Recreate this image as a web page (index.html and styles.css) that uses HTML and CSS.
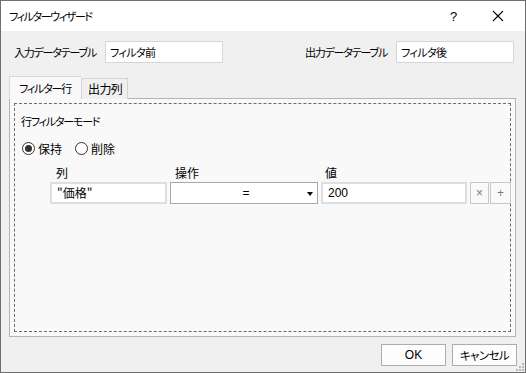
FILE: index.html
```html
<!DOCTYPE html>
<html lang="ja">
<head>
<meta charset="utf-8">
<link rel="stylesheet" href="styles.css">
</head>
<body>
<div class="window">
  <div class="titlebar">
    <span class="title kt">フィルターウィザード</span>
    <span class="help">?</span>
    <span class="close">
      <svg width="12" height="12" viewBox="0 0 12 12"><path d="M1 1 L11 11 M11 1 L1 11" stroke="#000" stroke-width="1.1" fill="none"/></svg>
    </span>
  </div>
  <div class="content">
    <div class="io-row">
      <div class="io-group">
        <span class="io-label kt">入力データテーブル</span>
        <div class="textbox">フィルタ前</div>
      </div>
      <div class="io-group">
        <span class="io-label kt">出力データテーブル</span>
        <div class="textbox">フィルタ後</div>
      </div>
    </div>
    <div class="tabs">
      <div class="tab active"><span class="kt">フィルター行</span></div>
      <div class="tab">出力列</div>
    </div>
    <div class="panel">
      <div class="focus">
        <div class="mode-label kt">行フィルターモード</div>
        <div class="radios">
          <span class="radio checked"></span><span class="radio-text">保持</span>
          <span class="radio"></span><span class="radio-text">削除</span>
        </div>
        <div class="grid">
          <span class="col-label">列</span>
          <span class="col-label">操作</span>
          <span class="col-label">値</span>
          <span></span><span></span>
          <div class="cell name">"価格"</div>
          <div class="select"><span class="sel-value">=</span><span class="arrow"></span></div>
          <div class="cell">200</div>
          <div class="mini">×</div>
          <div class="mini">+</div>
        </div>
      </div>
    </div>
    <div class="buttons">
      <div class="btn ok">OK</div>
      <div class="btn">キャンセル</div>
    </div>
    <div class="grip">
      <svg width="8" height="8" viewBox="0 0 8 8">
        <rect x="6" y="0" width="2" height="2" fill="#b8b8b8"/>
        <rect x="3" y="3" width="2" height="2" fill="#b8b8b8"/>
        <rect x="6" y="3" width="2" height="2" fill="#b8b8b8"/>
        <rect x="0" y="6" width="2" height="2" fill="#b8b8b8"/>
        <rect x="3" y="6" width="2" height="2" fill="#b8b8b8"/>
        <rect x="6" y="6" width="2" height="2" fill="#b8b8b8"/>
      </svg>
    </div>
  </div>
</div>
</body>
</html>
```

FILE: styles.css
```css
* { box-sizing: border-box; }
html, body { margin: 0; padding: 0; }
body {
  width: 526px;
  height: 373px;
  overflow: hidden;
  font-family: "Noto Sans CJK JP", "Noto Sans", sans-serif;
  font-size: 12px;
  font-feature-settings: "palt";
  color: #000;
  white-space: nowrap;
}
.kt { font-size: 11px; letter-spacing: -1.2px; }
.window {
  width: 526px;
  height: 373px;
  border: 1px solid #6f6f6f;
  background: #f0f0f0;
  display: flex;
  flex-direction: column;
}
.titlebar {
  height: 30px;
  background: #fff;
  display: flex;
  align-items: center;
  padding-left: 8px;
  flex-shrink: 0;
}
.title { flex: 1; line-height: 16px; margin-top: -1px; letter-spacing: -1.4px; }
.help { font-family: "Liberation Sans", sans-serif; font-size: 13px; width: 12px; margin-right: 30px; }
.close { width: 12px; height: 12px; margin-right: 21px; display: flex; }
.content {
  flex: 1;
  position: relative;
  padding: 10px 11px 0 8px;
  display: flex;
  flex-direction: column;
}
.io-row {
  display: flex;
  justify-content: space-between;
  height: 22px;
}
.io-group { display: flex; align-items: center; }
.io-group:first-child { margin-left: 5px; }
.io-label { width: 91px; }
.textbox {
  width: 118px;
  height: 22px;
  background: #fff;
  border: 1px solid #d6d6d6;
  padding: 0 4px;
  line-height: 20px;
  font-size: 11px;
  letter-spacing: -0.6px;
}
.tabs {
  margin-top: 13px;
  display: flex;
  align-items: flex-end;
  height: 23px;
  position: relative;
  z-index: 1;
  margin-bottom: -1px;
}
.tab {
  height: 21px;
  padding: 0 0 0 6px;
  border: 1px solid #d4d4d4;
  border-bottom: none;
  background: #f0f0f0;
  line-height: 20px;
  width: 47px;
  letter-spacing: -0.6px;
}
.tab.active {
  height: 23px;
  width: 72px;
  background: #f9f9f9;
  border-color: #d9d9d9;
  padding-left: 9px;
  line-height: 22px;
  border-right: none;
}
.panel {
  height: 239px;
  border: 1px solid #b4b4b4;
  background: #f9f9f9;
  padding: 4px;
  width: 507px;
}
.focus {
  height: 100%;
  border: 1px dashed #6b6b6b;
  padding: 9px 6px 0 6px;
}
.mode-label { line-height: 16px; }
.radios {
  display: flex;
  align-items: center;
  margin-top: 11px;
  height: 16px;
}
.radio {
  width: 13px;
  height: 13px;
  border: 1px solid #333;
  border-radius: 50%;
  background: #fff;
  position: relative;
  margin-left: 1px;
}
.radio.checked::after {
  content: "";
  position: absolute;
  left: 2px; top: 2px;
  width: 7px; height: 7px;
  border-radius: 50%;
  background: #333;
}
.radio-text { margin-left: 3px; margin-right: 12px; }
.grid {
  margin-left: 29px;
  margin-top: 9px;
  display: grid;
  grid-template-columns: 117px 148px 146px 19px 19px;
  column-gap: 3px;
  row-gap: 1px;
  grid-template-rows: 16px 22px;
}
.col-label { padding-left: 6px; line-height: 16px; }
.col-label:nth-child(2) { padding-left: 5px; }
.col-label:nth-child(3) { padding-left: 4px; }
.cell {
  height: 22px;
  background: #fff;
  border: 2px solid #dedede;
  padding: 0 5px;
  line-height: 18px;
  font-family: "Liberation Sans", "Noto Sans CJK JP", sans-serif;
  font-size: 12px;
}
.cell.name { font-family: "Noto Sans CJK JP", sans-serif; }
.select {
  height: 22px;
  background: #fff;
  border: 1px solid #a8a8a8;
  position: relative;
  display: flex;
  align-items: center;
  justify-content: center;
}
.sel-value { font-family: "Liberation Sans", sans-serif; margin-left: 4px; }
.arrow {
  position: absolute;
  right: 4px;
  top: 9px;
  width: 0; height: 0;
  border-left: 3.5px solid transparent;
  border-right: 3.5px solid transparent;
  border-top: 4px solid #000;
}
.mini {
  height: 22px;
  border: 1px solid #c8c8c8;
  background: #f9f9f9;
  color: #7a7a7a;
  font-family: "Liberation Sans", sans-serif;
  font-size: 12px;
  display: flex;
  align-items: center;
  justify-content: center;
}
.mini:last-child { margin-left: -2px; }
.buttons {
  display: flex;
  justify-content: flex-end;
  gap: 6px;
  margin-top: 7px;
}
.btn {
  width: 65px;
  height: 22px;
  background: #fdfdfd;
  border: 1px solid #adadad;
  text-align: center;
  line-height: 20px;
  font-size: 11.5px;
  letter-spacing: -0.6px;
}
.btn.ok { font-family: "Liberation Sans", sans-serif; letter-spacing: 0; font-size: 12px; }
.btn:last-child { margin-right: -3px; }
.grip {
  position: absolute;
  right: 1px;
  bottom: 1px;
  width: 8px;
  height: 8px;
  display: flex;
}
```
